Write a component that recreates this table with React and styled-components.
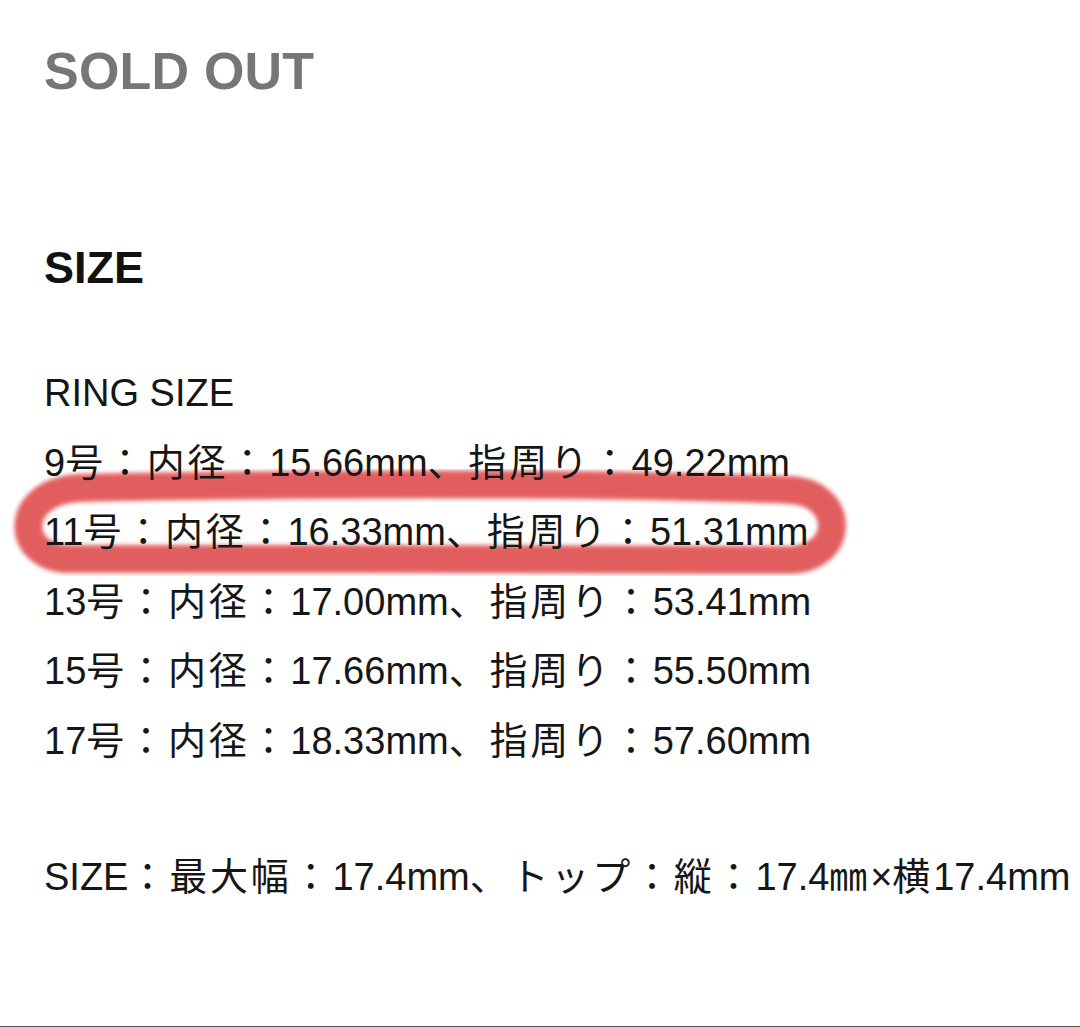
import React from "react";
import styled, { createGlobalStyle } from "styled-components";

const Global = createGlobalStyle`
  html, body { margin: 0; padding: 0; background: #fff; }
  body { font-family: "Liberation Sans", "Noto Sans CJK JP", sans-serif; }
`;

const Page = styled.div`
  box-sizing: border-box;
  width: 1080px;
  height: 1027px;
  padding: 45px 0 0 44px;
  border-bottom: 1px solid #555;
  overflow: hidden;
  color: #161616;
`;

const Status = styled.div`
  font-size: 52px;
  line-height: 52px;
  font-weight: 700;
  color: #767676;
  letter-spacing: 0.2px;
`;

const Heading = styled.h2`
  margin: 148px 0 0;
  font-size: 45px;
  line-height: 45px;
  font-weight: 700;
  color: #111;
`;

const List = styled.div`
  margin-top: 69px;
  display: flex;
  flex-direction: column;
`;

const Row = styled.div`
  position: relative;
  font-size: 38px;
  line-height: 69.5px;
  height: 69.5px;
  white-space: nowrap;
  margin-top: ${(p) => (p.$gap ? `${p.$gap}px` : "0")};
`;

const Text = styled.span`
  position: relative;
  z-index: 1;
`;

const Jp = styled.span`
  letter-spacing: 2.8px;
`;

const Marker = styled.svg`
  position: absolute;
  left: -44px;
  top: -32px;
  width: 860px;
  height: 125px;
  pointer-events: none;
  z-index: 0;
`;

const CJK = /([\u3000-\u30ff\u3300-\u33ff\u4e00-\u9fff\uff00-\uffef]+)/;

function Mixed({ children }) {
  return children.split(CJK).map((part, i) =>
    CJK.test(part) ? <Jp key={i}>{part}</Jp> : <React.Fragment key={i}>{part}</React.Fragment>
  );
}

const rows = [
  "9号：内径：15.66mm、指周り：49.22mm",
  "11号：内径：16.33mm、指周り：51.31mm",
  "13号：内径：17.00mm、指周り：53.41mm",
  "15号：内径：17.66mm、指周り：55.50mm",
  "17号：内径：18.33mm、指周り：57.60mm",
];

export default function App() {
  return (
    <>
      <Global />
      <Page>
        <Status>SOLD OUT</Status>
        <Heading>SIZE</Heading>
        <List>
          <Row>RING SIZE</Row>
          {rows.map((r, i) => (
            <Row key={r}>
              {i === 1 && (
                <Marker viewBox="0 0 860 125">
                  <defs>
                    <filter id="soft" x="-5%" y="-20%" width="110%" height="140%">
                      <feGaussianBlur stdDeviation="2" />
                    </filter>
                  </defs>
                  <path
                    d="M 80 22 C 350 17, 600 17, 790 24 C 846 27, 846 92, 790 94 C 600 94, 300 92, 70 93 C 14 93, 12 25, 80 22 Z"
                    fill="none"
                    stroke="#e15656"
                    strokeWidth="28"
                    strokeLinecap="round"
                    filter="url(#soft)"
                    opacity="0.95"
                  />
                </Marker>
              )}
              <Text>
                <Mixed>{r}</Mixed>
              </Text>
            </Row>
          ))}
          <Row $gap={67}>
            <Mixed>SIZE：最大幅：17.4mm、トップ：縦：17.4㎜×横17.4mm</Mixed>
          </Row>
        </List>
      </Page>
    </>
  );
}
